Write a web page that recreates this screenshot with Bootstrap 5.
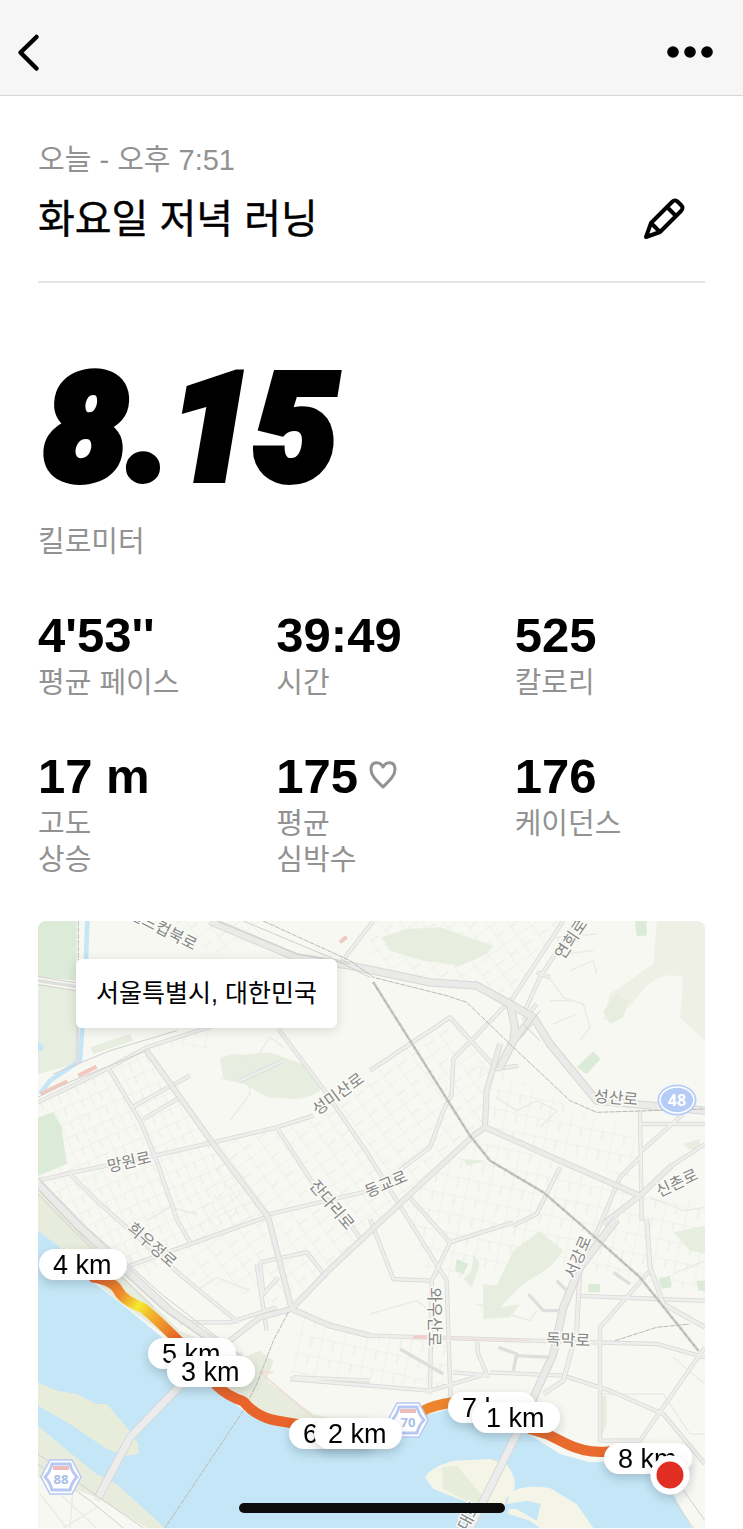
<!DOCTYPE html>
<html lang="ko">
<head>
<meta charset="utf-8">
<meta name="viewport" content="width=device-width, initial-scale=1">
<title>화요일 저녁 러닝</title>
<link href="https://cdn.jsdelivr.net/npm/bootstrap@5.3.0/dist/css/bootstrap.min.css" rel="stylesheet">
<style>
body{font-family:"Liberation Sans","Noto Sans CJK KR",sans-serif;color:#000;background:#fff;overflow-x:hidden}
.topbar{background:#f6f6f6;border-bottom:1px solid #d6d6d6;height:96px;padding:8px 28px 0 16px}
.icon-btn{border:0;background:none;padding:0;color:#000;line-height:0}
.page{padding:0 38px}
.soft{color:#929292;font-size:29px;line-height:36px;font-weight:400}
.run-head{padding:46px 0 32px;border-bottom:2px solid #e4e4e4}
.run-title{font-size:40px;line-height:60px;font-weight:400;-webkit-text-stroke:.4px #000}
.title-row{padding-top:11px}
.distance{font-family:Roboto,"Liberation Sans",sans-serif;font-weight:900;font-style:italic;font-size:148px;line-height:160px;padding:66px 0 15px 6px;-webkit-text-stroke:8px #000}
.metrics{padding-top:47px;row-gap:47px}
.metric-value{font-size:49px;line-height:56px;font-weight:700;margin-bottom:2px}
.map-box{margin-top:43px;border-radius:8px 8px 0 0;overflow:hidden}
.map-box svg.city{display:block;width:100%;height:auto}
.place-tag{left:38px;top:38px;padding:16px 20px;border-radius:6px;background:#fff;font-size:25px;line-height:37px;box-shadow:0 2px 12px #0002}
.home-bar{width:266px;height:10px;border-radius:5px;background:#0c0c0c;bottom:15px;left:50%;transform:translateX(-50%)}
.street{font-size:16px;font-weight:400;fill:#858585;stroke:#fafaf6;stroke-width:3px;paint-order:stroke;text-anchor:middle;dominant-baseline:central}
.pin rect{fill:#fff}
.pin text{font-size:27px;fill:#000}
.shield-no{font-size:16px;font-weight:700;text-anchor:middle;font-family:"Noto Sans",sans-serif}
.shield-small{font-size:13px}
</style>
</head>
<body>
<header class="topbar d-flex align-items-center justify-content-between">
  <button class="icon-btn" aria-label="뒤로"><svg width="26" height="40" viewBox="0 0 26 40" fill="none" stroke="#000" stroke-width="4.500" stroke-linecap="round" stroke-linejoin="round"><path d="M20.500 5 4.500 20.500 20.500 36.500"/></svg></button>
  <button class="icon-btn" aria-label="더 보기"><svg width="50" height="14" viewBox="0 0 50 14"><circle cx="8" cy="7" r="5.800"/><circle cx="25" cy="7" r="5.800"/><circle cx="42" cy="7" r="5.800"/></svg></button>
</header>
<main class="page">
  <section class="run-head">
    <div class="soft">오늘 - 오후 7:51</div>
    <div class="title-row d-flex align-items-center justify-content-between">
      <h1 class="run-title m-0">화요일 저녁 러닝</h1>
      <button class="icon-btn me-3" aria-label="이름 수정"><svg width="50" height="50" viewBox="0 0 50 50" fill="none" stroke="#000" stroke-width="4" stroke-linejoin="round"><path d="M7 43 12 29 33 8Q36 5 39 8L42 11Q45 14 42 17L21 38ZM28 13 37 22M12 29 21 38"/></svg></button>
    </div>
  </section>
  <section>
    <div class="distance">8.15</div>
    <div class="soft">킬로미터</div>
    <div class="row gx-5 metrics">
      <div class="col-4"><div class="metric-value">4'53''</div><div class="soft">평균 페이스</div></div>
      <div class="col-4"><div class="metric-value">39:49</div><div class="soft">시간</div></div>
      <div class="col-4"><div class="metric-value">525</div><div class="soft">칼로리</div></div>
      <div class="col-4"><div class="metric-value">17 m</div><div class="soft">고도<br>상승</div></div>
      <div class="col-4"><div class="metric-value d-flex align-items-center gap-2">175<svg width="36" height="32" viewBox="0 0 36 32" fill="none" stroke="#929292" stroke-width="3" stroke-linejoin="round"><path d="M17 27C11 21 5 16 5 9.500 5 1 14 1 17 7 20 1 29 1 29 9.500 29 16 23 21 17 27Z"/></svg></div><div class="soft">평균<br>심박수</div></div>
      <div class="col-4"><div class="metric-value">176</div><div class="soft">케이던스</div></div>
    </div>
  </section>
  <section class="map-box position-relative">
    <svg class="city" viewBox="38 922 667 607" role="img" aria-label="러닝 경로 지도">
      <defs>
        <pattern id="gridA" width="58" height="44" patternUnits="userSpaceOnUse" patternTransform="rotate(-24)"><path d="M0 0H58M0 0V44M30 0V26" stroke="#e9eae5" stroke-width="3" fill="none"/></pattern>
        <pattern id="gridB" width="52" height="70" patternUnits="userSpaceOnUse" patternTransform="rotate(-36)"><path d="M0 0H52M0 0V70M0 38H30" stroke="#e9eae5" stroke-width="3" fill="none"/></pattern>
        <pattern id="gridC" width="66" height="56" patternUnits="userSpaceOnUse" patternTransform="rotate(12)"><path d="M0 0H66M0 0V56M36 0V30" stroke="#e9eae5" stroke-width="3" fill="none"/></pattern>
        <linearGradient id="pace" gradientUnits="userSpaceOnUse" x1="190" y1="1095" x2="450" y2="1270"><stop offset="0" stop-color="#e8602a"/><stop offset=".3" stop-color="#ed8a2a"/><stop offset=".5" stop-color="#f6ea30"/><stop offset=".65" stop-color="#f2b52c"/><stop offset="1" stop-color="#e8602a"/></linearGradient>
        <filter id="lift" x="-30%" y="-40%" width="160%" height="220%"><feDropShadow dx="0" dy="4" stdDeviation="5" flood-color="#234" flood-opacity=".22"/></filter>
        <g id="wide">
          <path d="M24 565 240 460 350 400 520 345 800 240 930 150 1030 20M24 800 130 775 375 725 550 685 740 640 850 605M745 345 880 525 1010 715 1250 1100 1262 1465M235 460 330 620 380 740 440 915 480 985M740 640 860 825 960 930 1000 985M700 905 1020 830M24 800 160 960 330 1100M120 780 210 870 460 1090 625 1225M300 1055 720 905M450 1225H600L740 1180M1925 755 2025 690M1130 840 1260 985 1450 925M1260 985 1205 1100 1200 1440M1020 845 1120 760 1200 700 1240 590 1265 540 1270 435 1450 250 1600 20M1410 390 1370 530 1365 640M1480 320 1520 270M1480 300 1530 190 1640 21M1520 175 1560 190M1020 470 1260 310 1400 465 1465 455M1830 590 1835 920M1830 630H2025M1830 715 1960 600M1590 760 1520 900 1450 935M1830 730 1770 790 1690 980M1020 915 1090 1095 1200 1100M1640 1145 1880 1155 2025 1160M1860 1070 1710 1240V1580H1830L2025 1300M1380 1375 1600 1385 1740 1430 1900 1500 2025 1650M1340 1270 1345 1320 1370 1380 1200 1430 780 1395M1270 1375 1380 1385M690 1045 830 1015 890 1090M690 1045 700 1140 745 1090M680 1050 710 1250M790 1390 1020 1400M1020 1265 1500 1280 1880 1290 2025 1330M305 580 480 485M340 615 450 550M630 500 760 440"/>
        </g>
        <path id="avenue" d="M350 410 550 690 715 910 785 1185M600 1280 690 1210 785 1185 900 1065 1130 850 1330 665 1365 640 1590 740 1830 845 1925 755M785 1185 900 1235 1020 1265M1410 390 1370 530 1365 640M1830 845 1720 930"/>
        <g id="trunk">
          <path d="M540 21 800 130 960 155 1200 205 1340 215 1440 270 1510 310 1560 390 1700 560 1860 575 2025 590M1440 270 1455 340 1450 380 1410 460M1510 310 1450 380M1760 915 1650 1060 1600 1180 1570 1320 1520 1430 1480 1520M24 810 140 930 420 1190 620 1330"/>
        </g>
        <path id="rail" d="M1030 205 1320 665 1380 740 1540 835 1650 930 1830 1090 2005 1310"/>
      </defs>
      <g transform="translate(30 915) scale(.33333)">
        <path fill="#f7f8f2" d="M0 0H2100V1900H0Z"/>
        <path fill="url(#gridA)" d="M24 560 350 410 700 900 500 1000 330 1100 24 790Z"/>
        <path fill="url(#gridB)" d="M560 680 850 610 1000 500 1260 310 1400 460 1360 640 1130 840 780 1180 470 1090ZM400 21H760L560 130ZM1020 21H1600L1450 250 1020 160Z"/>
        <path fill="url(#gridC)" d="M1360 660 1820 850 2025 860V1140L1650 1060 1200 1100 1120 840ZM800 1180 1020 1270H1250V1420L780 1380ZM1330 430 1680 610 1820 640V800L1360 640ZM500 130 560 400 350 410 800 200Z"/>
        <g fill="#e7eedf">
          <path d="M24 210 140 230 135 450 24 480ZM570 435Q600 415 640 422L720 415 830 455 880 520Q850 550 800 555L715 550 640 510 580 495ZM1055 70 1130 45 1230 40 1390 95 1370 120 1290 155 1180 140 1080 110ZM1400 1115 1450 1010 1530 950 1600 1010 1560 1060 1480 1110 1410 1180 1470 1170 1440 1210 1360 1215V1110ZM1930 955 2025 935V1020L1980 1010ZM1330 1020 1350 1050 1325 1120 1300 1095 1325 1070ZM1300 735 1370 740 1310 755ZM1960 690 2010 675 2005 710 1975 705ZM190 420 310 380 300 360 180 400ZM1712 1445H1730V1530L1712 1575Z"/>
          <path fill="#eef0e6" d="M1880 21H2025V380L1950 310 1960 190Q1900 170 1850 215L1770 310 1720 320 1740 240 1870 150Z"/>
          <path d="M1720 290 1760 240 1795 260 1780 310 1740 330Z"/>
        </g>
        <path fill="#dcebd7" d="M24 21H140V200L24 188ZM24 610 70 595 95 640 110 750 24 785ZM1815 21H1850V65H1820ZM1640 460 1690 412 1712 435 1670 480ZM1280 1035 1315 1050 1300 1080 1275 1070ZM1885 1095 1920 1085 1925 1120 1895 1125ZM2000 1100H2025V1130H2005ZM1675 1110H1710V1135H1675Z"/>
        <path fill="#e7ecdc" d="M24 820 200 1010 450 1250 640 1330 690 1310 730 1340 710 1400 850 1500 1050 1545 1000 1580 750 1540 560 1420 400 1260 250 1150 150 1060 24 950ZM24 1510 140 1600 260 1710 440 1842H24Z"/>
        <path fill="#c5e6f6" d="M24 950 90 1000 150 1080 210 1120 300 1190 420 1290 500 1380 560 1425 640 1490 720 1530 810 1550 1000 1590 1120 1570 1180 1505 1280 1480 1380 1510 1480 1550 1590 1620 1680 1645 1790 1640 1870 1680 1930 1740 1985 1842H405L260 1710 200 1680 100 1600 24 1535Z"/>
        <path fill="none" stroke="#c5e6f6" stroke-width="14" d="M172 21 165 220 150 440 60 500 30 540"/>
        <path fill="#c5e6f6" d="M24 380 42 400 36 410H24Z"/>
        <path fill="#f4f4e7" d="M1185 1690Q1200 1660 1270 1640L1380 1635 1430 1650Q1480 1720 1430 1750L1420 1795 1350 1780 1210 1725ZM1440 1735Q1480 1710 1560 1722L1640 1770 1690 1842H1530L1500 1820 1435 1800Q1430 1780 1460 1785L1520 1820 1532 1770 1490 1760 1430 1770Z"/>
        <path fill="#e8eddb" d="M24 1405 80 1430 140 1440 200 1470 230 1470 290 1540 325 1590V1620L290 1625 230 1605 120 1530 24 1475ZM1235 1660 1280 1655 1400 1795 1330 1770 1240 1725Z"/>
        <path fill="#f7f8f2" d="M24 1690 200 1750 350 1842H24Z"/>
        <g fill="none" stroke="#f1c9c0" stroke-width="12"><path d="M32 540 112 502M145 485 200 458M930 85 950 68"/><path stroke="#eedcd6" stroke-width="5" d="M690 1375 850 1510 990 1540M730 1375H690"/></g>
        <g fill="none" stroke="#e9eae6" stroke-width="4"><path d="M1550 180 1600 250 1660 270 1680 340 1650 380M1620 170 1690 140 1700 180M1560 260H1630M1570 330 1640 300M1400 550 1460 590 1520 560 1580 590 1530 640M1860 850 1960 890 2025 880M1710 1440H1900L1980 1560H2025M1020 1200 1160 1160 1200 1190M1340 1170 1500 1220 1520 1190M1930 1330 2025 1410M2025 1040 1930 1080M570 500 650 430 660 540 600 620M680 430 720 370 760 400M350 920 420 880 500 900M500 1130 560 1090 660 1130M30 1740 110 1842M90 1740 200 1842M130 1710 120 1842M200 1780 100 1842M1700 60 1580 70 1600 120 1690 110"/></g>
        <g fill="none" stroke-linejoin="round">
          <use href="#wide" stroke="#dadad9" stroke-width="13"/><use href="#wide" stroke="#eeeeec" stroke-width="8"/>
          <path stroke="#dadad9" stroke-width="15" d="M1650 1060 1640 1250 1600 1400 1540 1440M1850 915 1860 1060 1900 1170 2025 1240"/><path stroke="#eeeeec" stroke-width="10" d="M1650 1060 1640 1250 1600 1400 1540 1440M1850 915 1860 1060 1900 1170 2025 1240"/>
          <use href="#avenue" stroke="#d7d7d6" stroke-width="18"/><use href="#avenue" stroke="#ebebea" stroke-width="13"/>
          <use href="#trunk" stroke="#d7d7d6" stroke-width="25"/><use href="#trunk" stroke="#eaeae9" stroke-width="19"/>
          <path stroke="#f1cfc8" stroke-width="10" d="M1150 1269H1200"/><path stroke="#f0dfda" stroke-width="4" d="M1230 1272 1500 1279"/>
          <path stroke="#d8d8d8" stroke-width="26" d="M620 1330 450 1415 300 1570 205 1750"/><path stroke="#ececec" stroke-width="20" d="M640 1320 450 1415 300 1570 200 1760"/>
          <path stroke="#d8d8d8" stroke-width="26" d="M1480 1520 1320 1842"/><path stroke="#ececec" stroke-width="20" d="M1490 1500 1320 1842"/>
          <path stroke="#d2cfce" stroke-width="3" d="M24 790 170 940 400 1145 640 1330M24 825 160 970 390 1180 560 1300M24 840 140 960 370 1180M640 21 900 130 1020 190M24 188 140 207M24 212 140 230M70 480 240 410 440 350M24 550 80 520 350 410M560 21 800 120 960 150M24 1620 200 1745 340 1842M24 1650 180 1760 280 1842M1910 1730 1990 1842M1940 1700 2025 1820M1480 330 1530 380M1470 370 1530 290"/>
          <path stroke="#dedfdd" stroke-width="10" d="M24 200 140 218M140 450 145 230M1240 1380 1110 1305M1495 1140 1540 1190H1590M1450 1370 1460 1320 1405 1300M1460 1325 1560 1330M1750 1075 1800 1110M1580 1100 1610 1130"/>
          <use href="#rail" stroke="#d0d1cc" stroke-width="8"/><use href="#rail" stroke="#b4b6b0" stroke-width="3"/><use href="#rail" stroke="#b4b6b0" stroke-width="8" stroke-dasharray="3 18"/>
          <path stroke="#b9b9b6" stroke-width="3" stroke-dasharray="16 3" d="M145 21V140M700 21 960 140 1030 190 1250 245 1310 265 1450 400 1620 560 1700 595 2025 585M775 1195 730 1280 680 1410 640 1490 405 1842M1755 1280 1880 1240 1980 1230"/>
        </g>
        <g fill="none" stroke-linecap="round" stroke-linejoin="round" stroke-width="31">
          <path stroke="url(#pace)" d="M190 1090Q250 1100 265 1130T340 1182Q385 1220 450 1285"/>
          <path stroke="#e8642a" d="M560 1415Q590 1445 640 1462 680 1510 740 1520L800 1530"/>
          <path stroke="#ee842c" d="M1180 1490Q1210 1473 1270 1465"/>
          <path stroke="#e86a2c" d="M1500 1545 1550 1560 1610 1590Q1670 1620 1740 1612"/>
        </g>
      </g>
      <g class="street">
        <text transform="translate(163 930) rotate(27)">월드컵북로</text>
        <text transform="translate(338 1095) rotate(-36)">성미산로</text>
        <text transform="translate(129 1163) rotate(-13)">망원로</text>
        <text transform="translate(332 1206) rotate(50)">잔다리로</text>
        <text transform="translate(386 1185) rotate(-23)">동교로</text>
        <text transform="translate(571 940) rotate(-56)">연희로</text>
        <text transform="translate(616 1099) rotate(5)">성산로</text>
        <text transform="translate(677 1184) rotate(-25)">신촌로</text>
        <text transform="translate(152 1246) rotate(41)">희우정로</text>
        <text transform="translate(434 1318) rotate(90)">와우산로</text>
        <text transform="translate(578 1258) rotate(-67)">서강로</text>
        <text transform="translate(568 1341) rotate(2)">독막로</text>
        <text transform="translate(469 1517) rotate(-62)">대로</text>
      </g>
      <g>
        <ellipse cx="677" cy="1101" rx="19.500" ry="15.500" fill="#b4ccf6"/><ellipse cx="677" cy="1101" rx="17" ry="13" fill="#b4ccf6" stroke="#fff" stroke-width="1.500"/>
        <text class="shield-no" x="677" y="1107" fill="#fff">48</text>
        <g id="hex"><path fill="#fff" stroke="#b7c9f2" stroke-width="1.500" d="M50 1461H72L81 1478 72 1495H50L41 1478Z"/><path fill="#fff" stroke="#b7c9f2" stroke-width="3" d="M52 1465H70Q72 1473 77 1478 72 1483 70 1491H52Q50 1483 45 1478 50 1473 52 1465Z"/><path fill="#efbdb9" d="M53 1467H69V1471H53Z"/></g>
        <use href="#hex" x="347" y="-57"/>
        <text class="shield-no shield-small" x="61" y="1485" fill="#a9bfe8">88</text>
        <text class="shield-no shield-small" x="408" y="1428" fill="#a9bfe8">70</text>
      </g>
      <g class="pin">
        <g filter="url(#lift)"><rect x="39" y="1250" width="88" height="31" rx="15.500"/><text x="53" y="1275">4 km</text></g>
        <g filter="url(#lift)"><rect x="148" y="1339" width="88" height="31" rx="15.500"/><text x="162" y="1364">5 km</text></g>
        <g filter="url(#lift)"><rect x="167" y="1357" width="88" height="31" rx="15.500"/><text x="181" y="1382">3 km</text></g>
        <g filter="url(#lift)"><rect x="289" y="1419" width="88" height="31" rx="15.500"/><text x="303" y="1444">6 km</text></g>
        <g filter="url(#lift)"><rect x="314" y="1419" width="88" height="31" rx="15.500"/><text x="328" y="1444">2 km</text></g>
        <g filter="url(#lift)"><rect x="448" y="1393" width="88" height="31" rx="15.500"/><text x="462" y="1418">7 km</text></g>
        <g filter="url(#lift)"><rect x="472" y="1403" width="88" height="31" rx="15.500"/><text x="486" y="1428">1 km</text></g>
        <g filter="url(#lift)"><rect x="604" y="1444" width="88" height="31" rx="15.500"/><text x="618" y="1469">8 km</text></g>
        <circle cx="670" cy="1476" r="16.500" fill="#e02f20" stroke="#fff" stroke-width="6" filter="url(#lift)"/>
      </g>
    </svg>
    <div class="place-tag position-absolute">서울특별시, 대한민국</div>
    <div class="home-bar position-absolute"></div>
  </section>
</main>
<script src="https://cdn.jsdelivr.net/npm/bootstrap@5.3.0/dist/js/bootstrap.bundle.min.js"></script>
</body>
</html>
